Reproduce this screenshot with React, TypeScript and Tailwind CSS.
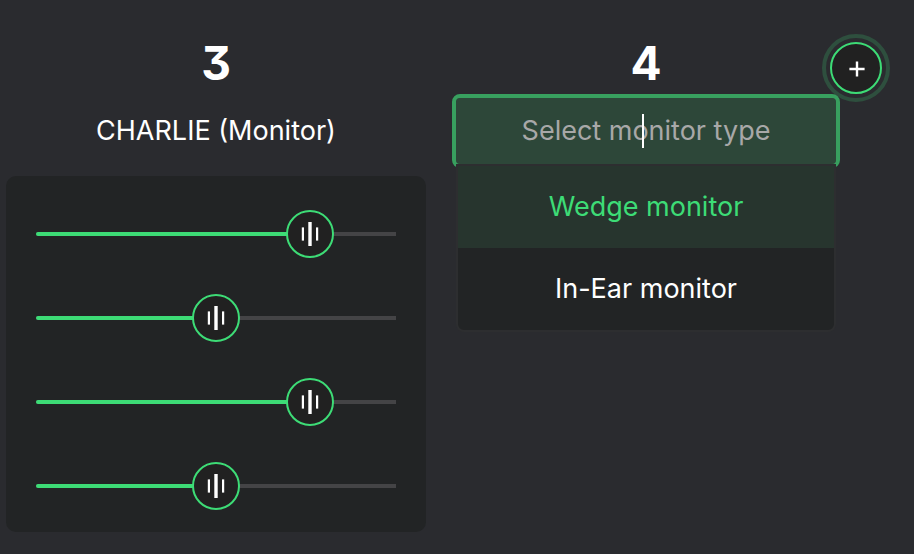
import { useState } from "react"

const levels = [80, 50, 80, 50]

const monitorTypes = ["Wedge monitor", "In-Ear monitor"]

function LevelSlider({ label, initial }: { label: string; initial: number }) {
  const [value, setValue] = useState(initial)
  // the 48px thumb stays inside the track, like a native range thumb
  const position = `calc(24px + (100% - 48px) * ${value / 100})`

  return (
    <div className="relative flex h-12 items-center">
      <div className="h-1 w-full rounded-l-full bg-[#444446]">
        <div className="h-1 rounded-l-full bg-[#3ddc76]" style={{ width: position }} />
      </div>
      <div
        className="absolute top-0 flex size-12 -translate-x-1/2 items-center justify-center rounded-full border-2 border-[#3ddc76] bg-[#212121]"
        style={{ left: position }}
      >
        <svg width="18" height="24" viewBox="0 0 18 24" fill="#ffffff" aria-hidden="true">
          <rect x="0.8" y="5.4" width="2.2" height="13.2" />
          <rect x="7.3" y="0" width="3.4" height="24" />
          <rect x="15" y="5.4" width="2.2" height="13.2" />
        </svg>
      </div>
      <input
        type="range"
        min={0}
        max={100}
        value={value}
        aria-label={label}
        onChange={(e) => setValue(Number(e.target.value))}
        className="absolute inset-0 h-12 w-full cursor-pointer opacity-0"
      />
    </div>
  )
}

function MonitorChannel() {
  return (
    <section>
      <h2 className="text-center text-[46px] leading-[50px] font-bold">3</h2>
      <h3 className="mt-2.5 text-center text-[27px] leading-[66px]">CHARLIE (Monitor)</h3>
      <div className="mt-3 flex flex-col gap-9 rounded-[10px] bg-[#222425] px-[30px] pt-[34px] pb-[22px]">
        {levels.map((level, i) => (
          <LevelSlider key={i} label={`Channel ${i + 1} level`} initial={level} />
        ))}
      </div>
    </section>
  )
}

function NewChannel() {
  const [query, setQuery] = useState("")
  const [active, setActive] = useState(0)

  return (
    <section className="relative">
      <h2 className="text-center text-[46px] leading-[50px] font-bold">4</h2>
      <button
        type="button"
        aria-label="Add channel"
        className="absolute top-1 -right-[26px] flex size-[52px] items-center justify-center rounded-full border-2 border-[#3ddc76] bg-[#212121] outline-4 outline-offset-4 outline-[#2e4f3e]"
      >
        <svg width="18" height="18" viewBox="0 0 18 18" fill="none" stroke="#ffffff" strokeWidth="2.4" aria-hidden="true">
          <path d="M10 2.4v15.2M2.4 10h15.2" />
        </svg>
      </button>
      <div className="relative mx-5 mt-2.5">
        <input
          type="text"
          value={query}
          placeholder="Select monitor type"
          aria-label="Monitor type"
          onChange={(e) => setQuery(e.target.value)}
          className="block h-[66px] w-full rounded-[4px] bg-[#2d4739] pb-0.5 text-center text-[27px] caret-transparent outline-4 outline-[#38a05f] placeholder:text-[#a8a8a8]"
        />
        <span className="pointer-events-none absolute top-4 left-1/2 h-[34px] w-0.5 -translate-x-1 bg-white" />
        <ul
          role="listbox"
          aria-label="Monitor types"
          className="absolute inset-x-0 top-full overflow-hidden rounded-b-lg border-2 border-[#2d2e30] bg-[#222425]"
        >
          {monitorTypes.map((type, i) => (
            <li key={type} role="option" aria-selected={i === active}>
              <button
                type="button"
                onClick={() => setActive(i)}
                className={
                  i === active
                    ? "block w-full bg-[#27352e] text-center text-[27px] leading-[82px] text-[#3ddc76]"
                    : "block w-full text-center text-[27px] leading-[82px] text-white"
                }
              >
                {type}
              </button>
            </li>
          ))}
        </ul>
      </div>
    </section>
  )
}

export default function App() {
  return (
    <main className="min-h-screen bg-[#2a2b2f] pt-[38px] pr-[58px] pb-[22px] pl-1.5 font-['Inter',sans-serif] text-white [font-feature-settings:'cv09']">
      <div className="grid grid-cols-2 gap-2.5">
        <MonitorChannel />
        <NewChannel />
      </div>
    </main>
  )
}
